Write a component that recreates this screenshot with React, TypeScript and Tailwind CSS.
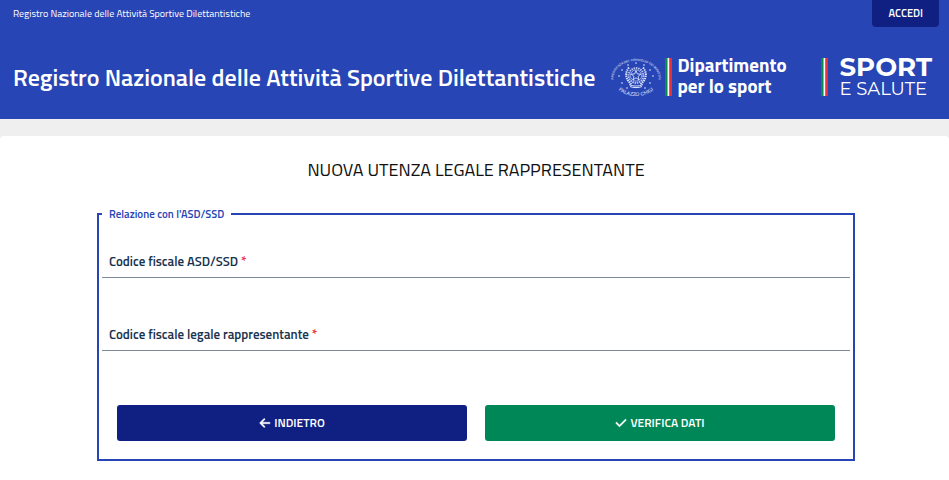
import React, { useState } from 'react';
import { FaArrowLeft, FaCheck } from 'react-icons/fa6';

const SITE_NAME = 'Registro Nazionale delle Attività Sportive Dilettantistiche';

const STARS = [
  [24, 6], [32, 8], [38, 13], [41, 19], [38, 26], [33, 31],
  [16, 8], [10, 13], [7, 19], [10, 26], [15, 31]
];

const Emblem: React.FC = () => (
  <svg viewBox="0 0 48 40" className="h-10 w-12 shrink-0 overflow-visible" fill="none" stroke="#dbe4ff" aria-hidden="true">
    <defs>
      <path id="ring-top" d="M3 27 A22.5 17 0 1 1 45 27" />
      <path id="ring-bottom" d="M0 20 A24 19 0 0 0 48 20" />
    </defs>
    <g fill="#eaf0ff" stroke="none" fontFamily="Liberation Sans, sans-serif">
      <text fontSize="3.1">
        <textPath href="#ring-top" startOffset="50%" textAnchor="middle">PRESIDENZA DEL CONSIGLIO DEI MINISTRI</textPath>
      </text>
      <text fontSize="5">
        <textPath href="#ring-bottom" startOffset="50%" textAnchor="middle">PALAZZO CHIGI</textPath>
      </text>
      {STARS.map(([x, y]) => (
        <circle key={`${x}-${y}`} cx={x} cy={y} r="0.8" />
      ))}
    </g>
    {/* gear wheel, star and branches */}
    <circle cx="24" cy="18.5" r="7.4" strokeWidth="2" strokeDasharray="1.5 0.8" opacity="0.8" />
    <circle cx="24" cy="18.5" r="5.6" strokeWidth="0.6" />
    <path d="M24 13.5l1.3 3.4 3.6.2-2.8 2.2.9 3.5-3-2-3 2 .9-3.5-2.8-2.2 3.6-.2z" strokeWidth="0.9" />
    <path d="M17 10.5c-5 6-3 13 3 17M31 10.5c5 6 3 13-3 17" strokeWidth="2" strokeDasharray="1.4 0.8" />
    <path d="M17 27.5c4 2 10 2 14 0M18 29.5c3 1.5 9 1.5 12 0" strokeWidth="1" />
  </svg>
);

const Flag: React.FC = () => (
  <svg viewBox="0 0 7 38" preserveAspectRatio="none" className="h-[38px] w-[7px] shrink-0" aria-hidden="true">
    <path fill="#078c4b" d="M0 0h2.5v38H0z" />
    <path fill="#fff" d="M2.5 0h2v38h-2z" />
    <path fill="#e5303b" d="M4.5 0H7v38H4.5z" />
  </svg>
);

interface FieldProps {
  id: string;
  label: string;
  value: string;
  onChange: (value: string) => void;
}

const Field: React.FC<FieldProps> = ({ id, label, value, onChange }) => (
  <div className="flex h-8 items-center gap-2 border-b border-[#7d899b] px-[7px]">
    <label htmlFor={id} className="shrink-0 text-[13px] font-semibold text-[#17324d]">
      {label} <span className="text-[#e5303b]">*</span>
    </label>
    <input
      id={id}
      type="text"
      required
      value={value}
      onChange={e => onChange(e.target.value)}
      className="min-w-0 flex-1 bg-transparent text-[13px] outline-none"
    />
  </div>
);

const App: React.FC = () => {
  const [codiceAsd, setCodiceAsd] = useState('');
  const [codiceLegale, setCodiceLegale] = useState('');

  return (
    <div className="min-h-screen bg-[#efefef] font-['Titillium_Web',Roboto,sans-serif]">
      <header className="bg-[#2745b4] text-white">
        <div className="flex items-start justify-between pr-[10px] pl-[13px]">
          <a href="#" className="text-[10px] leading-[27px]">{SITE_NAME}</a>
          <button
            type="button"
            className="h-[27px] rounded-b bg-[#101f82] px-4 text-[11px] font-semibold"
          >
            ACCEDI
          </button>
        </div>

        <div className="flex h-[92px] items-center justify-between pt-[7px] pr-[17px] pl-[13px]">
          <h1 className="text-2xl font-semibold whitespace-nowrap">{SITE_NAME}</h1>
          <div className="flex items-center gap-[34px]">
            <div className="flex items-center gap-[5px]">
              <Emblem />
              <Flag />
              <p className="pb-1 text-[19px] leading-[21px] font-bold">
                Dipartimento<br />per lo sport
              </p>
            </div>
            <div className="flex items-center gap-3 font-['Montserrat',Inter,sans-serif]">
              <Flag />
              <p>
                <span className="block text-[26px] leading-6 font-bold">SPORT</span>
                <span className="block text-[18px] leading-5">E SALUTE</span>
              </p>
            </div>
          </div>
        </div>
      </header>

      <main className="mt-[17px] min-h-[344px] rounded-t bg-white pt-5 pr-[94px] pb-5 pl-[97px]">
        <h2 className="text-center text-lg leading-7 text-[#111]">NUOVA UTENZA LEGALE RAPPRESENTANTE</h2>

        <form onSubmit={e => e.preventDefault()}>
          <fieldset className="mt-6 border-2 border-[#2745b4] px-[3px] pb-[18px]">
            <legend className="px-[7px] text-[11px] leading-3 font-semibold text-[#2745b4]">
              Relazione con l'ASD/SSD
            </legend>
            <div className="flex flex-col gap-[41px] pt-[26px]">
              <Field id="codice-asd" label="Codice fiscale ASD/SSD" value={codiceAsd} onChange={setCodiceAsd} />
              <Field
                id="codice-legale"
                label="Codice fiscale legale rappresentante"
                value={codiceLegale}
                onChange={setCodiceLegale}
              />
            </div>
            <div className="mt-[54px] grid grid-cols-2 gap-[18px] px-[15px] text-xs font-semibold text-white">
              <button type="button" className="flex h-9 items-center justify-center gap-[3px] rounded-[3px] bg-[#101f82]">
                <FaArrowLeft className="size-3" stroke="currentColor" strokeWidth="16" aria-hidden="true" />
                INDIETRO
              </button>
              <button type="submit" className="flex h-9 items-center justify-center gap-[3px] rounded-[3px] bg-[#008758]">
                <FaCheck className="size-3" stroke="currentColor" strokeWidth="16" aria-hidden="true" />
                VERIFICA DATI
              </button>
            </div>
          </fieldset>
        </form>
      </main>
    </div>
  );
};

export default App;
